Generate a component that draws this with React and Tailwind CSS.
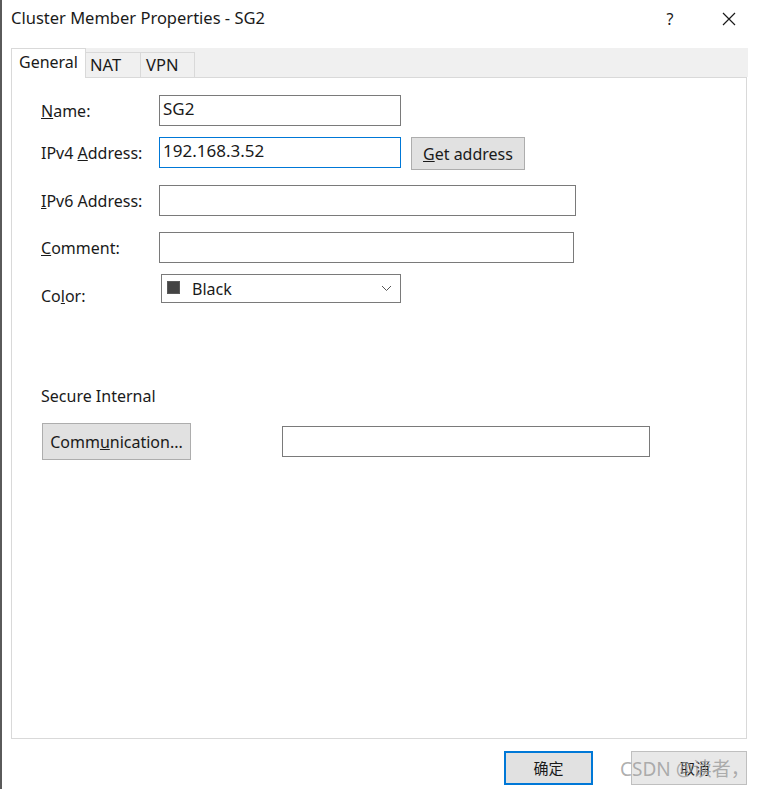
import React from "react";

const font = { fontFamily: '"Noto Sans", "Open Sans", "Noto Sans CJK SC", sans-serif' };

function Field({ className = "", value = "", focused = false }) {
  return (
    <div
      className={`h-[31px] bg-white border flex items-center px-[3px] pb-[3px] text-[17px] text-[#1a1a1a] ${
        focused ? "border-[#0078d7]" : "border-[#7a7a7a]"
      } ${className}`}
    >
      {value}
    </div>
  );
}

function Label({ children, className = "" }) {
  return <div className={`w-[118px] shrink-0 text-[16px] text-[#1a1a1a] ${className}`}>{children}</div>;
}

export default function App() {
  return (
    <div className="w-[757px] h-[789px] bg-white relative overflow-hidden border-l-2 border-[#5a5a5a]" style={font}>
      {/* title bar */}
      <div className="h-[37px] flex items-center pl-[9px] pr-[20px]">
        <div className="text-[16.5px] text-[#1a1a1a] flex-1">Cluster Member Properties - SG2</div>
        <div className="text-[16px] text-[#1a1a1a] w-[16px] text-center mr-[44px]">?</div>
        <svg width="14" height="14" viewBox="0 0 14 14" className="mr-[1px]">
          <path d="M1 1 L13 13 M13 1 L1 13" stroke="#1a1a1a" strokeWidth="1.2" fill="none" />
        </svg>
      </div>

      {/* tabs strip */}
      <div className="mt-[11px] ml-[9px] mr-[9px] h-[29px] bg-[#f0f0f0] flex items-end relative">
        <div className="h-[30px] w-[75px] bg-white border border-[#d9d9d9] border-b-0 flex items-center justify-center text-[16px] text-[#1a1a1a] relative top-[1px] z-10 pb-[4px]">
          General
        </div>
        <div className="h-[25px] w-[55px] border border-[#d9d9d9] border-l-0 border-b-0 flex items-center pl-[4px] text-[16.5px] text-[#1a1a1a]">
          NAT
        </div>
        <div className="h-[25px] w-[54px] border border-[#d9d9d9] border-l-0 border-b-0 flex items-center pl-[5px] text-[16.5px] text-[#1a1a1a]">
          VPN
        </div>
      </div>

      {/* panel */}
      <div className="ml-[9px] mr-[10px] h-[662px] border border-[#d9d9d9] bg-white pl-[29px] pt-[17px]">
        <div className="flex items-center h-[31px]">
          <Label><span className="underline">N</span>ame:</Label>
          <Field className="w-[242px]" value="SG2" />
        </div>
        <div className="flex items-start mt-[11px]">
          <Label className="h-[31px] flex items-center">
            IPv4&nbsp;<span className="underline">A</span>ddress:
          </Label>
          <Field className="w-[242px]" value="192.168.3.52" focused />
          <div className="ml-[10px] h-[33px] w-[114px] bg-[#e1e1e1] border border-[#adadad] flex items-center justify-center text-[16px] text-[#1a1a1a]">
            <span className="underline">G</span>et address
          </div>
        </div>
        <div className="flex items-center mt-[15px]">
          <Label><span className="underline">I</span>Pv6 Address:</Label>
          <Field className="w-[417px]" />
        </div>
        <div className="flex items-center mt-[16px]">
          <Label><span className="underline">C</span>omment:</Label>
          <Field className="w-[415px]" />
        </div>
        <div className="flex items-start mt-[11px]">
          <Label className="pt-[10px]">
            Co<span className="underline">l</span>or:
          </Label>
          <div className="ml-[2px] h-[29px] w-[240px] bg-white border border-[#7a7a7a] flex items-center pl-[5px] pr-[8px] text-[16px] text-[#1a1a1a]">
            <div className="w-[13px] h-[13px] bg-[#444444] border border-[#5a5a5a] mr-[12px] -mt-[3px]" />
            <span className="flex-1">Black</span>
            <svg width="11" height="7" viewBox="0 0 11 7">
              <path d="M1 1 L5.5 5.5 L10 1" stroke="#555" strokeWidth="1" fill="none" />
            </svg>
          </div>
        </div>

        <div className="mt-[76px] text-[16px] text-[#1a1a1a]">Secure Internal</div>
        <div className="flex items-center mt-[15px]">
          <div className="h-[37px] w-[149px] bg-[#e1e1e1] border border-[#adadad] flex items-center justify-center text-[16px] text-[#1a1a1a] ml-[1px]">
            Comm<span className="underline">u</span>nication...
          </div>
          <div className="ml-[91px] h-[31px] w-[368px] bg-white border border-[#7a7a7a]" />
        </div>
      </div>

      {/* bottom buttons */}
      <div className="flex justify-end mt-[12px] mr-[10px] gap-[38px]">
        <div className="h-[34px] w-[89px] bg-[#e1e1e1] border-2 border-[#0078d7] flex items-center justify-center text-[15px] text-[#1a1a1a]">
          确定
        </div>
        <div className="h-[34px] w-[116px] bg-[#e8e8e8] border border-[#bfbfbf] flex items-center justify-center text-[15px] text-[#1a1a1a] pl-[12px]">
          取消
        </div>
      </div>

      {/* watermark */}
      <div className="absolute left-[618px] top-[755px] text-[19px] text-[#9a9a9a]/80 whitespace-nowrap pointer-events-none">
        CSDN @读者，
      </div>
    </div>
  );
}
